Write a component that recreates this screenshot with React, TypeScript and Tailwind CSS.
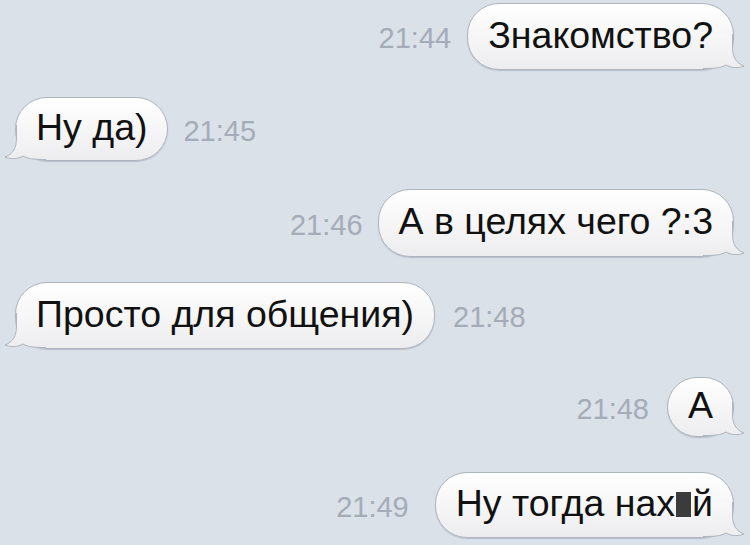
import React from "react";

type Msg = {
  side: "in" | "out";
  text: React.ReactNode;
  time: string;
  top: string;
  gap: string;
  h: string;
};

const messages: Msg[] = [
  { side: "out", text: "Знакомство?", time: "21:44", top: "mt-[3px]", gap: "gap-[16px]", h: "h-[67px]" },
  { side: "in", text: "Ну да)", time: "21:45", top: "mt-[27px]", gap: "gap-[15px]", h: "h-[64px]" },
  { side: "out", text: "А в целях чего ?:3", time: "21:46", top: "mt-[28px]", gap: "gap-[15px]", h: "h-[68px]" },
  { side: "in", text: "Просто для общения)", time: "21:48", top: "mt-[25px]", gap: "gap-[18px]", h: "h-[67px]" },
  { side: "out", text: "А", time: "21:48", top: "mt-[28px]", gap: "gap-[18px]", h: "h-[60px]" },
  {
    side: "out",
    text: (
      <>
        Ну тогда нах
        <span className="inline-block w-[15px] h-[25px] bg-[#3b3b3b] align-[-1px] mx-[1px]" />
        й
      </>
    ),
    time: "21:49",
    top: "mt-[35px]",
    gap: "gap-[26px]",
    h: "h-[66px]",
  },
];

// bubble tail, drawn for the right side and mirrored for the left
const Tail = ({ side }: { side: "in" | "out" }) => {
  const id = `tail-${side}`;
  return (
    <svg
      width="42"
      height="36"
      viewBox="0 0 42 36"
      className={
        side === "out"
          ? "absolute right-[-12px] bottom-[-1px]"
          : "absolute left-[-12px] bottom-[-1px] -scale-x-100"
      }
    >
      <defs>
        <linearGradient id={id} x1="0" y1="0" x2="0" y2="1">
          <stop offset="0" stopColor="#f8f8f9" />
          <stop offset="1" stopColor="#ededef" />
        </linearGradient>
      </defs>
      <path
        d="M0 0 L29.5 0 L29.5 13 C29.5 23 33 29 41 32 C35 34.5 28 34 23 31 C18 34 12 34.5 0 34.5 Z"
        fill={`url(#${id})`}
      />
      <path
        d="M29.5 0 L29.5 13 C29.5 23 33 29 41 32 C35 34.5 28 34 23 31 C18 34 12 34.5 0 34.5"
        fill="none"
        stroke="#aeb5be"
        strokeWidth="1"
      />
    </svg>
  );
};

const Bubble = ({ m }: { m: Msg }) => (
  <div
    className={`relative ${m.h} min-w-[62px] flex items-center justify-center px-[20px] rounded-[32px] border border-[#aeb5be] bg-gradient-to-b from-white to-[#ededef] shadow-[0_1px_1px_rgba(120,130,145,0.35)]`}
  >
    <Tail side={m.side} />
    <span className="relative text-[37.5px] leading-none text-[#111111] whitespace-nowrap pb-[2px]">
      {m.text}
    </span>
  </div>
);

const Time = ({ t }: { t: string }) => (
  <span className="text-[29px] leading-none text-[#a4acb7] pt-[4px]">{t}</span>
);

export default function App() {
  return (
    <div
      className="w-[750px] h-[545px] overflow-hidden bg-[#dbe1e9] flex flex-col"
      style={{ fontFamily: '"Liberation Sans", Arial, sans-serif' }}
    >
      {messages.map((m, i) =>
        m.side === "out" ? (
          <div key={i} className={`${m.top} flex items-center justify-end pr-[16px] ${m.gap}`}>
            <Time t={m.time} />
            <Bubble m={m} />
          </div>
        ) : (
          <div key={i} className={`${m.top} flex items-center justify-start pl-[15px] ${m.gap}`}>
            <Bubble m={m} />
            <Time t={m.time} />
          </div>
        )
      )}
    </div>
  );
}
